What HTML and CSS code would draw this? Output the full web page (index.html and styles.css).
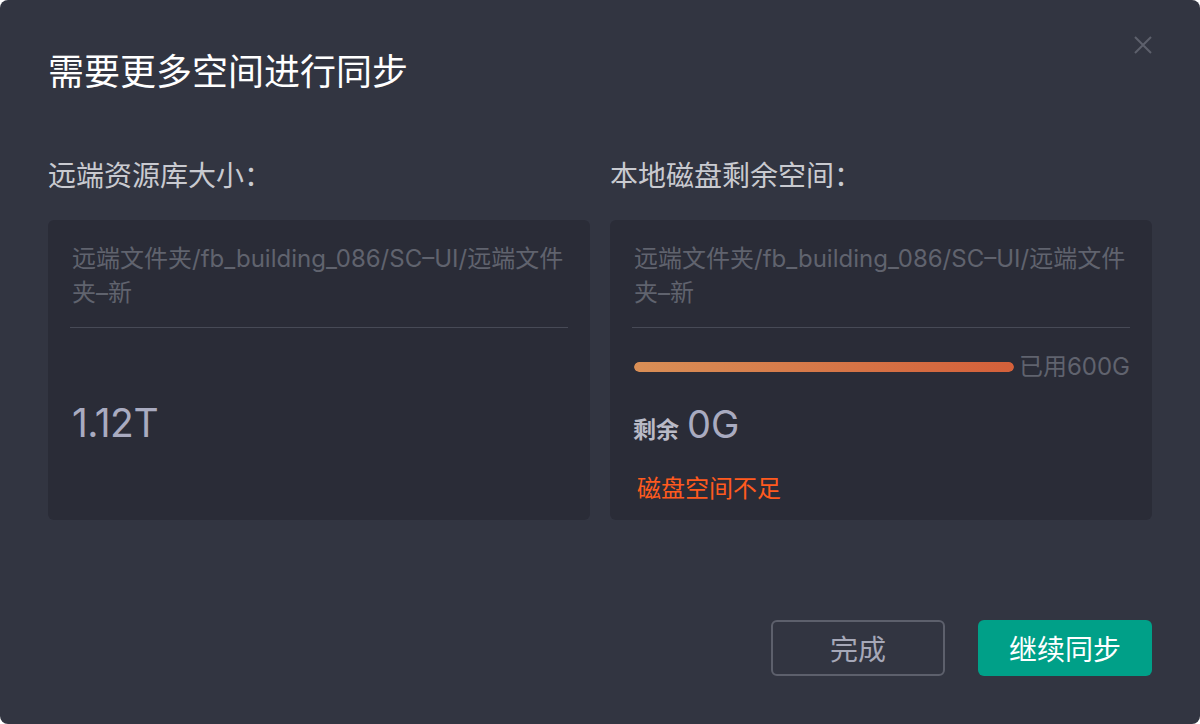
FILE: index.html
```html
<!DOCTYPE html>
<html lang="zh-CN">
<head>
    <meta charset="UTF-8" />
    <link rel="stylesheet" href="styles.css">
</head>
<body>

<div class="dialog">
    <button class="close-btn" aria-label="关闭">
        <svg width="18" height="18" viewBox="0 0 18 18">
            <path d="M1 1 L17 17 M17 1 L1 17" stroke="#5d606c" stroke-width="2" fill="none" />
        </svg>
    </button>

    <h1 class="title">需要更多空间进行同步</h1>

    <div class="columns">
        <div class="column">
            <div class="label">远端资源库大小：</div>
            <div class="card">
                <div class="path">远端文件夹/fb_building_086/SC–UI/远端文件夹–新</div>
                <div class="size-value">1.12T</div>
            </div>
        </div>

        <div class="column">
            <div class="label">本地磁盘剩余空间：</div>
            <div class="card">
                <div class="path">远端文件夹/fb_building_086/SC–UI/远端文件夹–新</div>
                <div class="usage">
                    <div class="usage-bar"><div class="usage-fill" style="width:100%"></div></div>
                    <span class="usage-text">已用600G</span>
                </div>
                <div class="remain">
                    <span class="remain-label">剩余</span>
                    <span class="remain-value">0G</span>
                </div>
                <div class="warning">磁盘空间不足</div>
            </div>
        </div>
    </div>

    <div class="actions">
        <button class="btn btn-outline">完成</button>
        <button class="btn btn-primary">继续同步</button>
    </div>
</div>

</body>
</html>
```

FILE: styles.css
```css
body {
    margin: 0;
    padding: 0;
    background-color: #ffffff;
    font-family: Inter, "Noto Sans CJK SC", sans-serif;
}

.dialog {
    position: relative;
    box-sizing: border-box;
    width: 1200px;
    height: 724px;
    padding: 48px 48px 0;
    background-color: #323541;
    border-radius: 8px;
    display: flex;
    flex-direction: column;
}

.close-btn {
    position: absolute;
    top: 36px;
    right: 48px;
    width: 18px;
    height: 18px;
    padding: 0;
    border: none;
    background: none;
    cursor: pointer;
}

.close-btn svg {
    display: block;
}

.title {
    margin: 0;
    font-size: 36px;
    line-height: 48px;
    font-weight: 400;
    color: #ffffff;
}

.columns {
    display: grid;
    grid-template-columns: 1fr 1fr;
    gap: 20px;
    margin-top: 62px;
}

.label {
    font-size: 28px;
    line-height: 36px;
    color: #c9cad0;
}

.card {
    box-sizing: border-box;
    height: 300px;
    margin-top: 26px;
    padding: 22px 22px 0;
    background-color: #2a2c37;
    border-radius: 6px;
    display: flex;
    flex-direction: column;
}

.path {
    padding: 0 0 17px 2px;
    font-size: 24px;
    line-height: 34px;
    color: #60636e;
    border-bottom: 1px solid #474a56;
}

.size-value {
    margin-top: 71px;
    padding-left: 2px;
    font-size: 39px;
    line-height: 48px;
    letter-spacing: -0.5px;
    color: #a9abc0;
}

.usage {
    display: flex;
    align-items: center;
    gap: 5px;
    margin-top: 22px;
    padding-left: 2px;
}

.usage-bar {
    flex: 1;
    height: 10px;
    border-radius: 5px;
    overflow: hidden;
}

.usage-fill {
    height: 100%;
    border-radius: 5px;
    background: linear-gradient(90deg, #d98f56, #d4603a);
}

.usage-text {
    font-size: 24px;
    line-height: 34px;
    color: #60636e;
}

.remain {
    margin-top: 16px;
    padding-left: 1px;
    display: flex;
    align-items: baseline;
    gap: 8px;
    line-height: 48px;
}

.remain-label {
    font-size: 23px;
    font-weight: 700;
    color: #b9bac6;
}

.remain-value {
    font-size: 38px;
    color: #a9abc0;
}

.warning {
    margin-top: 18px;
    padding-left: 5px;
    font-size: 24px;
    line-height: 34px;
    color: #ff5a1e;
}

.actions {
    display: flex;
    justify-content: flex-end;
    gap: 33px;
    margin-top: 100px;
}

.btn {
    box-sizing: border-box;
    width: 174px;
    height: 56px;
    border-radius: 6px;
    font-family: Inter, "Noto Sans CJK SC", sans-serif;
    font-size: 28px;
    cursor: pointer;
}

.btn-outline {
    background: none;
    border: 2px solid #5d606c;
    color: #a6a8b8;
}

.btn-primary {
    background-color: #00a088;
    border: none;
    color: #ffffff;
}
```
